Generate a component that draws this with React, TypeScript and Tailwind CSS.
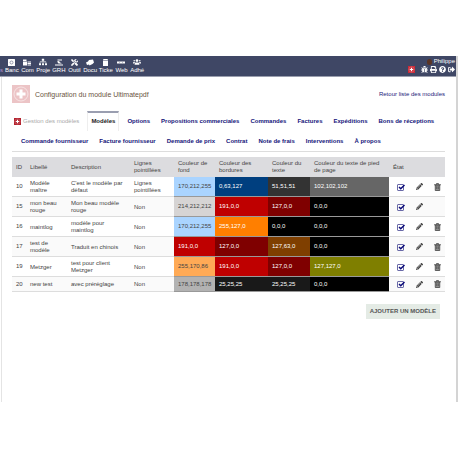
import type { ReactNode } from "react";
import clsx from "clsx";
import {
  FaBug,
  FaPencilAlt,
  FaPrint,
  FaQuestionCircle,
  FaSignOutAlt,
  FaSitemap,
  FaTools,
  FaUsers,
} from "react-icons/fa";

type MenuItem = {
  label: string;
  icon: ReactNode;
};

type Color = {
  value: string;
  className: string;
};

type Model = {
  id: number;
  label: string;
  description: string;
  lines: string;
  colors: Color[];
  deletable: boolean;
};

const BankIcon = () => (
  <svg viewBox="0 0 14 14" className="size-[7px]" fill="none">
    <rect x="0" y="0" width="14" height="14" rx="1" fill="#fff" />
    <circle cx="7" cy="7" r="3" stroke="#7d839b" strokeWidth="1.6" />
  </svg>
);

const BuildingIcon = () => (
  <svg viewBox="0 0 16 14" className="h-[7px] w-2" fill="#fff">
    <path d="M0 1h7v3h-7zM0 5h8v8H0zM9 5h7v2H9zM9 8h7v2H9zM9 11h7v2H9z" />
  </svg>
);

const HrmIcon = () => (
  <svg viewBox="0 0 16 14" className="h-[7px] w-2" fill="#fff">
    <path d="M5 1h9v2H5zM4 5l4-1 2 3 3 1v1H7zM0 11h16v2H0z" />
  </svg>
);

const DocIcon = () => (
  <svg viewBox="0 0 16 14" className="h-[7px] w-2" fill="#fff">
    <path d="M6 2l8-1 2 6-3 3-6 3-1-2-4 1-2-5 4-2z" />
  </svg>
);

const TicketIcon = () => (
  <svg viewBox="0 0 14 14" className="size-[7px]" fill="#fff">
    <path d="M3 0h8l1 2H2zM2 3h10v11H2z" />
  </svg>
);

const WebIcon = () => (
  <svg viewBox="0 0 16 14" className="h-[7px] w-2" fill="#fff">
    <path d="M0 5h16v4H0z" />
    <path d="M5 6h1v2H5zM10 6h1v2h-1z" fill="#8288a0" />
  </svg>
);

const TrashIcon = () => (
  <svg viewBox="0 0 14 16" className="h-2 w-[7px]" fill="none" stroke="#444" strokeWidth="1.6">
    <path d="M2.500 4h9v11h-9z" fill="#999" />
    <path d="M0 3.500h14M5 3V1h4v2M5.500 6.500v6M8.500 6.500v6" />
  </svg>
);

const PlusLogo = ({ className }: { className: string }) => (
  <svg viewBox="0 0 18 18" className={className} fill="none">
    <rect width="18" height="18" fill="currentColor" />
    <circle cx="9" cy="9" r="7" stroke="#fff" strokeOpacity="0.5" />
    <path d="M7.500 4.500h3v3h3v3h-3v3h-3v-3h-3v-3h3z" fill="#fff" />
  </svg>
);

const menu: MenuItem[] = [
  { label: "Banc", icon: <BankIcon /> },
  { label: "Com", icon: <BuildingIcon /> },
  { label: "Proje", icon: <FaSitemap className="size-2" /> },
  { label: "GRH", icon: <HrmIcon /> },
  { label: "Outil", icon: <FaTools className="size-[7px]" /> },
  { label: "Docu", icon: <DocIcon /> },
  { label: "Ticke", icon: <TicketIcon /> },
  { label: "Web", icon: <WebIcon /> },
  { label: "Adhé", icon: <FaUsers className="size-2" /> },
];

const firstTabs = [
  "Modèles",
  "Options",
  "Propositions commerciales",
  "Commandes",
  "Factures",
  "Expéditions",
  "Bons de réceptions",
];

const secondTabs = [
  "Commande fournisseur",
  "Facture fournisseur",
  "Demande de prix",
  "Contrat",
  "Note de frais",
  "Interventions",
  "À propos",
];

const columns = [
  { name: "ID", width: "w-[14px]" },
  { name: "Libellé", width: "w-[41px]" },
  { name: "Description", width: "" },
  { name: "Lignes pointillées", width: "w-[44px]" },
  { name: "Couleur de fond", width: "w-[41px]" },
  { name: "Couleur des bordures", width: "w-[53px]" },
  { name: "Couleur du texte", width: "w-[42px]" },
  { name: "Couleur du texte de pied de page", width: "w-[79px]" },
  { name: "État", width: "w-[22px]" },
  { name: "", width: "w-[18px]" },
  { name: "", width: "w-[16px]" },
];

const black = { value: "0,0,0", className: "bg-black text-white" };
const red = { value: "191,0,0", className: "bg-[#bf0000] text-white" };
const darkRed = { value: "127,0,0", className: "bg-[#7f0000] text-white" };
const lightBlue = { value: "170,212,255", className: "bg-[#aad4ff] text-[#444]" };
const charcoal = { value: "25,25,25", className: "bg-[#191919] text-white" };

const models: Model[] = [
  {
    id: 10,
    label: "Modèle maître",
    description: "C'est le modèle par défaut",
    lines: "Lignes pointillées",
    colors: [
      lightBlue,
      { value: "0,63,127", className: "bg-[#003f7f] text-white" },
      { value: "51,51,51", className: "bg-[#333333] text-white" },
      { value: "102,102,102", className: "bg-[#666666] text-white" },
    ],
    deletable: true,
  },
  {
    id: 15,
    label: "mon beau rouge",
    description: "Mon beau modèle rouge",
    lines: "Non",
    colors: [{ value: "214,212,212", className: "bg-[#d6d4d4] text-[#444]" }, red, darkRed, black],
    deletable: false,
  },
  {
    id: 16,
    label: "maintlog",
    description: "modèle pour maintlog",
    lines: "Non",
    colors: [lightBlue, { value: "255,127,0", className: "bg-[#ff7f00] text-white" }, black, black],
    deletable: true,
  },
  {
    id: 17,
    label: "test de modèle",
    description: "Traduit en chinois",
    lines: "Non",
    colors: [red, darkRed, { value: "127,63,0", className: "bg-[#7f3f00] text-white" }, black],
    deletable: true,
  },
  {
    id: 19,
    label: "Metzger",
    description: "test pour client Metzger",
    lines: "Non",
    colors: [
      { value: "255,170,86", className: "bg-[#ffaa56] text-[#444]" },
      red,
      darkRed,
      { value: "127,127,0", className: "bg-[#7f7f00] text-white" },
    ],
    deletable: true,
  },
  {
    id: 20,
    label: "new test",
    description: "avec préréglage",
    lines: "Non",
    colors: [{ value: "178,178,178", className: "bg-[#b2b2b2] text-[#444]" }, charcoal, charcoal, black],
    deletable: true,
  },
];

function TopBar() {
  return (
    <header className="flex h-[21px] justify-between border-b border-[#9a9eae] bg-[#3f4765] text-white">
      <nav className="flex">
        <span className="w-1 pt-[11px] text-[#b48fd0]">s</span>
        <div className="grid w-[141px] grid-cols-9">
          {menu.map((item) => (
            <a key={item.label} href="#" className="flex flex-col items-center gap-px pt-[2px]">
              <span className="flex h-2 items-center">{item.icon}</span>
              <span>{item.label}</span>
            </a>
          ))}
        </div>
      </nav>
      <div className="flex flex-col items-end gap-px pt-[2px] pr-px">
        <a href="#" className="flex items-center gap-[2px]">
          <span className="h-[6px] w-[5px] rounded-full bg-[#5a3526]" />
          Philippe
        </a>
        <div className="flex items-center gap-[2px]">
          <PlusLogo className="mr-1 size-[7px] text-[#cc2936]" />
          <button aria-label="Bug"><FaBug className="size-[7px]" /></button>
          <button aria-label="Imprimer"><FaPrint className="size-[7px]" /></button>
          <button aria-label="Aide"><FaQuestionCircle className="size-[7px]" /></button>
          <button aria-label="Déconnexion"><FaSignOutAlt className="size-[7px]" /></button>
        </div>
      </div>
    </header>
  );
}

function Tabs() {
  return (
    <nav className="mt-2 border-b border-[#ddd] font-bold text-[#14147a]">
      <div className="flex h-5 items-center whitespace-nowrap">
        <span className="mr-2 ml-[2px] flex items-center gap-[2px] font-normal text-[#aaa]">
          <PlusLogo className="size-[7px] text-[#b3202c]" />
          Gestion des modèles
        </span>
        {firstTabs.map((tab, i) => (
          <a
            key={tab}
            href="#"
            className={clsx(
              "flex h-full items-center",
              i === 0 ? "mr-2 border-x border-t-2 border-x-[#eee] border-t-[#9a9eb0] px-[3px] pb-[2px] text-[#222]" : "mr-[11px]",
            )}
          >
            {tab}
          </a>
        ))}
      </div>
      <div className="flex h-5 items-center gap-[11px] pl-[9px] whitespace-nowrap">
        {secondTabs.map((tab) => (
          <a key={tab} href="#">
            {tab}
          </a>
        ))}
      </div>
    </nav>
  );
}

function StatusBox({ label }: { label: string }) {
  return (
    <label className="grid size-2">
      <input
        type="checkbox"
        defaultChecked
        aria-label={`État ${label}`}
        className="col-start-1 row-start-1 size-[7px] appearance-none self-end rounded-[1px] border border-[#6a6aa8]"
      />
      <svg viewBox="0 0 16 16" className="pointer-events-none col-start-1 row-start-1 size-2" fill="none">
        <path d="M4 8l3.500 3.500L15 4" stroke="#0a0a78" strokeWidth="3" />
      </svg>
    </label>
  );
}

function ModelTable() {
  return (
    <table className="mt-[5px] w-full table-fixed text-left text-[#444]">
      <thead>
        <tr className="h-5 bg-[#dcdcdf]">
          {columns.map((column, i) => (
            <th key={i} className={clsx("pl-1 font-normal", column.width, i === 7 && "pr-2")}>
              {column.name}
            </th>
          ))}
        </tr>
      </thead>
      <tbody>
        {models.map((model) => (
          <tr key={model.id} className="border-b border-[#ddd] even:bg-[#fafafa]">
            <td className="pl-1">{model.id}</td>
            <td className="pt-[3px] pr-2 pb-[2px] pl-1">{model.label}</td>
            <td className="pt-[3px] pr-[6px] pb-[2px] pl-1">{model.description}</td>
            <td className="pt-[3px] pb-[2px] pl-1">{model.lines}</td>
            {model.colors.map((color, i) => (
              <td key={i} className={clsx("border-b border-[#999] pl-1", color.className)}>
                {color.value}
              </td>
            ))}
            <td className="pl-2">
              <StatusBox label={model.label} />
            </td>
            <td className="pl-[5px]">
              <button aria-label="Modifier" className="block">
                <FaPencilAlt className="size-[7px]" />
              </button>
            </td>
            <td className="py-[3px] pl-[5px]">
              {model.deletable && (
                <button aria-label="Supprimer" className="block">
                  <TrashIcon />
                </button>
              )}
            </td>
          </tr>
        ))}
      </tbody>
    </table>
  );
}

export default function App() {
  return (
    <div className="bg-white pt-14 font-['Liberation_Sans',Arial,sans-serif] text-[6px] leading-[7px]">
      <div className="border-r-2 border-[#d4d4d4]">
        <TopBar />
        <main className="ml-px border-l border-[#e4e4e4] pt-2 pr-[11px] pb-[83px] pl-[10px]">
          <div className="flex items-center justify-between">
            <h1 className="flex items-center gap-[5px] text-[7px] text-[#6a5440]">
              <PlusLogo className="size-[18px] text-[#ecc4c6]" />
              Configuration du module Ultimatepdf
            </h1>
            <a href="#" className="text-[#22227a]">
              Retour liste des modules
            </a>
          </div>
          <Tabs />
          <ModelTable />
          <div className="mt-3 flex justify-end pr-[5px]">
            <button className="bg-[#e4ebe5] px-1 py-1 font-bold text-[#555]">AJOUTER UN MODÈLE</button>
          </div>
        </main>
      </div>
    </div>
  );
}
